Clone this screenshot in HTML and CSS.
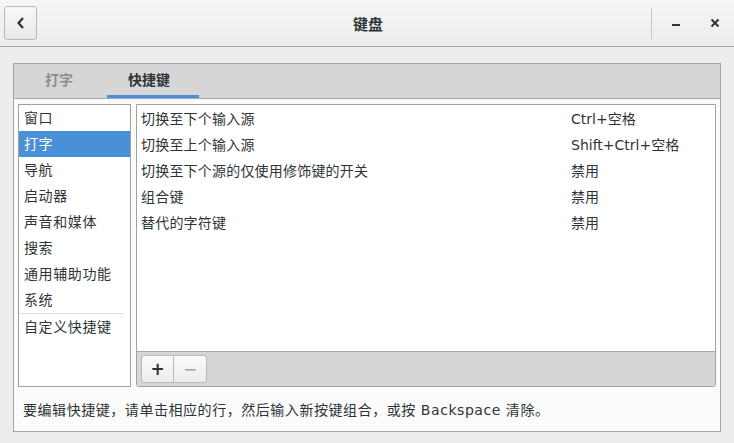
FILE: index.html
```html
<!DOCTYPE html>
<html lang="zh-CN">
<head>
    <meta charset="UTF-8">
    <title>键盘</title>
    <link rel="stylesheet" href="styles.css">
</head>
<body>
    <div class="header">
        <button class="back-btn" type="button">
            <svg width="10" height="14" viewBox="0 0 10 14"><path d="M7 2 L2.5 7 L7 12" fill="none" stroke="#2e3436" stroke-width="2.2"/></svg>
        </button>
        <div class="title">键盘</div>
        <div class="win-controls">
            <span class="sep"></span>
            <span class="win-btn">
                <svg width="10" height="10" viewBox="0 0 10 10"><rect x="1" y="6" width="8" height="2" fill="#2e3436"/></svg>
            </span>
            <span class="win-btn">
                <svg width="10" height="10" viewBox="0 0 10 10"><path d="M1.5 1.5 L8.5 8.5 M8.5 1.5 L1.5 8.5" stroke="#2e3436" stroke-width="2"/></svg>
            </span>
        </div>
    </div>

    <div class="content">
        <div class="frame">
            <div class="tabs">
                <div class="tab">打字</div>
                <div class="tab active">快捷键</div>
            </div>
            <div class="panel">
                <ul class="sections">
                    <li>窗口</li>
                    <li class="selected">打字</li>
                    <li>导航</li>
                    <li>启动器</li>
                    <li>声音和媒体</li>
                    <li>搜索</li>
                    <li>通用辅助功能</li>
                    <li class="last">系统</li>
                    <li>自定义快捷键</li>
                </ul>
                <div class="shortcuts">
                    <div class="rows">
                        <div class="row"><span class="name">切换至下个输入源</span><span class="accel">Ctrl+空格</span></div>
                        <div class="row"><span class="name">切换至上个输入源</span><span class="accel">Shift+Ctrl+空格</span></div>
                        <div class="row"><span class="name">切换至下个源的仅使用修饰键的开关</span><span class="accel">禁用</span></div>
                        <div class="row"><span class="name">组合键</span><span class="accel">禁用</span></div>
                        <div class="row"><span class="name">替代的字符键</span><span class="accel">禁用</span></div>
                    </div>
                    <div class="toolbar">
                        <button class="tool-btn add" type="button">+</button>
                        <button class="tool-btn remove" type="button">−</button>
                    </div>
                </div>
            </div>
            <div class="hint">要编辑快捷键，请单击相应的行，然后输入新按键组合，或按 Backspace 清除。</div>
        </div>
    </div>
</body>
</html>
```

FILE: styles.css
```css
body {
    margin: 0;
    background-color: #ededed;
    font-family: "DejaVu Sans", "Noto Sans CJK SC", sans-serif;
    font-size: 14px;
    color: #2e3436;
}
.header {
    height: 46px;
    display: flex;
    align-items: center;
    background: linear-gradient(#f6f6f6, #ececec);
    border-bottom: 1px solid #a8a8a8;
}
.back-btn {
    margin-left: 4px;
    width: 33px;
    height: 34px;
    border: 1px solid #b8b8b8;
    border-radius: 3px;
    background: linear-gradient(#f8f8f8, #e8e8e8);
    display: flex;
    align-items: center;
    justify-content: center;
    padding: 0;
}
.title {
    flex: 1;
    text-align: center;
    font-weight: bold;
    font-size: 15px;
    margin-left: 48px;
}
.win-controls {
    display: flex;
    align-items: center;
    height: 100%;
}
.sep {
    width: 1px;
    height: 31px;
    background-color: #c8c8c8;
    margin-right: 4px;
}
.win-btn {
    width: 39px;
    display: flex;
    justify-content: center;
    align-items: center;
}
.content {
    padding: 16px 13px 0;
}
.frame {
    border: 1px solid #a6a6a6;
    background-color: #fbfbfb;
}
.tabs {
    height: 34px;
    background-color: #d6d6d6;
    border-bottom: 1px solid #a6a6a6;
    display: flex;
    padding-left: 16px;
}
.tab {
    padding: 0 15px;
    line-height: 32px;
    font-weight: bold;
    color: #8b8e8f;
    margin-right: 19px;
    border-bottom: 3px solid transparent;
}
.tab.active {
    color: #2e3436;
    border-bottom-color: #4a90d9;
    padding: 0 29px 0 21px;
}
.panel {
    display: flex;
    gap: 5px;
    padding: 5px 4px 0;
    height: 283px;
}
.sections {
    list-style: none;
    margin: 0;
    padding: 0;
    width: 111px;
    border: 1px solid #a1a1a1;
    background-color: #fff;
    letter-spacing: 0.6px;
}
.sections li {
    height: 26px;
    line-height: 26px;
    padding-left: 5px;
}
.sections li.selected {
    background-color: #4a90d9;
    color: #fff;
}
.sections li.last {
    border-bottom: 1px solid #e0e0e0;
    margin: 0 6px 0 0;
}
.shortcuts {
    flex: 1;
    border: 1px solid #a1a1a1;
    border-radius: 0 0 3px 3px;
    display: flex;
    flex-direction: column;
    background-color: #fff;
    overflow: hidden;
}
.rows {
    flex: 1;
    padding-top: 1px;
}
.row {
    display: flex;
    height: 26px;
    line-height: 26px;
    padding-left: 4px;
}
.name {
    width: 430px;
    letter-spacing: 0.2px;
}
.toolbar {
    height: 34px;
    background-color: #d6d6d6;
    border-top: 1px solid #a8a8a8;
    display: flex;
    align-items: center;
    padding-left: 4px;
}
.tool-btn {
    width: 33px;
    height: 28px;
    border: 1px solid #b8b8b8;
    background: linear-gradient(#fafafa, #ededed);
    font-family: "DejaVu Sans", sans-serif;
    font-size: 17px;
    padding: 0;
    color: #2e3436;
}
.tool-btn.add {
    border-radius: 3px 0 0 3px;
    font-weight: bold;
}
.tool-btn.remove {
    border-left: none;
    border-radius: 0 3px 3px 0;
    color: #a4a7a7;
}
.hint {
    height: 44px;
    line-height: 46px;
    padding-left: 9px;
    letter-spacing: 0.55px;
}
```
